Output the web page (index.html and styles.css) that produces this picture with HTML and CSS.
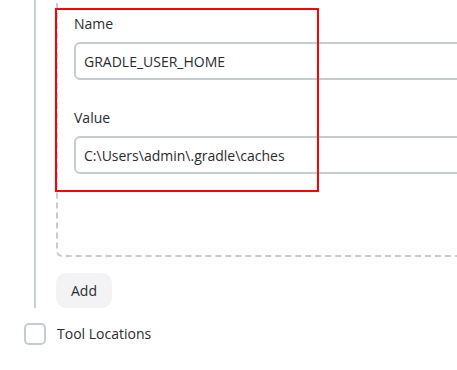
FILE: index.html
```html
<!DOCTYPE html>
<html lang="en">
<head>
    <meta charset="UTF-8">
    <meta name="viewport" content="width=device-width, initial-scale=1.0">
    <title>Environment variables</title>
    <link rel="stylesheet" href="styles.css">
</head>
<body>
    <div class="repeated">
        <div class="chunk">
            <label class="field-label">Name</label>
            <input class="field-input" type="text" value="GRADLE_USER_HOME">

            <label class="field-label second">Value</label>
            <input class="field-input" type="text" value="C:\Users\admin\.gradle\caches">
        </div>

        <button class="add-btn">Add</button>
    </div>

    <div class="option">
        <span class="checkbox"></span>
        <span class="option-text">Tool Locations</span>
    </div>

    <div class="highlight"></div>
</body>
</html>
```

FILE: styles.css
```css
body {
    font-family: "Open Sans", "Noto Sans", sans-serif;
    font-size: 14px;
    line-height: 20px;
    color: #2b2b33;
    background: white;
    margin: 0;
    overflow: hidden;
    position: relative;
}

.repeated {
    margin-left: 34px;
    margin-top: -30px;
    border-left: 2px solid #c8cfd3;
    padding-left: 20px;
}

.chunk {
    width: 700px;
    border: 2px dashed #c5ccd0;
    border-radius: 6px;
    padding: 42px 0 81px 16px;
}

.field-label {
    display: block;
    margin-bottom: 8px;
}

.field-label.second {
    margin-top: 28px;
}

.field-input {
    display: block;
    box-sizing: border-box;
    width: 500px;
    height: 38px;
    padding: 0 8px;
    border: 2px solid #c5ccd0;
    border-radius: 6px;
    font-family: inherit;
    font-size: 14px;
    color: #2b2b33;
    background: white;
}

.add-btn {
    display: block;
    margin-top: 16px;
    width: 56px;
    height: 35px;
    border: none;
    border-radius: 10px;
    background: #f3f3f6;
    font-family: inherit;
    font-size: 14px;
    color: #2b2b33;
    padding: 0;
}

.option {
    display: flex;
    align-items: center;
    gap: 11px;
    margin: 15px 0 0 24px;
}

.checkbox {
    box-sizing: border-box;
    width: 22px;
    height: 22px;
    border: 2px solid #c5ccd0;
    border-radius: 5px;
}

.highlight {
    position: absolute;
    left: 55px;
    top: 8px;
    width: 260px;
    height: 180px;
    border: 2px solid #ff0000;
}
```
